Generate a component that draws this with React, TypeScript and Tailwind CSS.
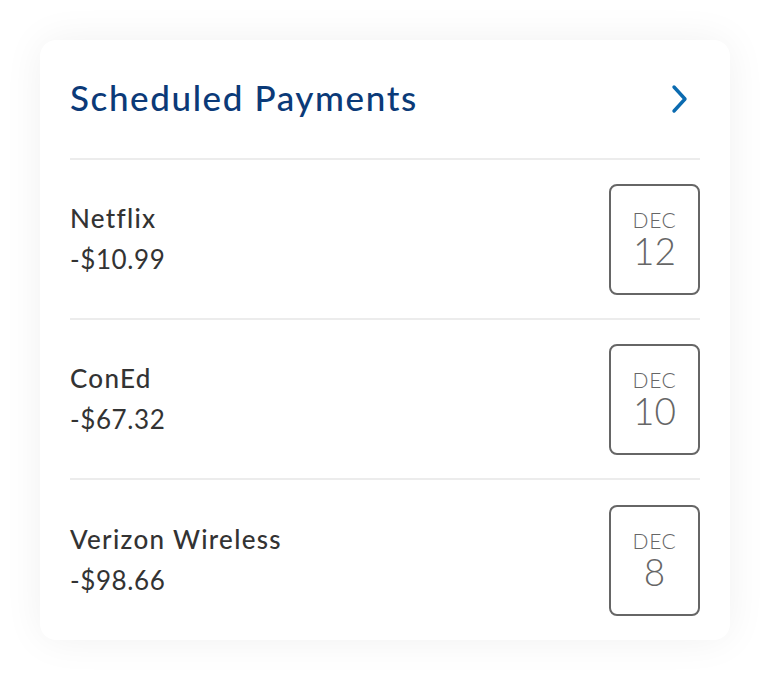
import React from 'react';

interface Payment {
    name: string;
    amount: string;
    month: string;
    day: string;
}

const payments: Payment[] = [
    { name: 'Netflix', amount: '-$10.99', month: 'DEC', day: '12' },
    { name: 'ConEd', amount: '-$67.32', month: 'DEC', day: '10' },
    { name: 'Verizon Wireless', amount: '-$98.66', month: 'DEC', day: '8' },
];

export default function App(): React.ReactElement {
    return (
        <div className="min-h-[680px] w-[770px] bg-white pt-10 pl-10" style={{ fontFamily: 'Lato, "Open Sans", sans-serif' }}>
            <div className="w-[690px] rounded-2xl bg-white px-[30px] shadow-[0_0_40px_rgba(0,0,0,0.06)]">
                {/* Header */}
                <div className="flex h-[120px] items-center justify-between border-b-2 border-[#ececec] pb-1">
                    <h2 className="text-[35px] font-medium tracking-[1.6px] text-[#0b3a78]">Scheduled Payments</h2>
                    <svg width="20" height="30" viewBox="0 0 20 30" fill="none" className="mt-1 mr-[10px]">
                        <path d="M4 3 L15 15 L4 27" stroke="#0b6bb0" strokeWidth="3.4" strokeLinecap="round" strokeLinejoin="round" />
                    </svg>
                </div>

                {/* Rows */}
                {payments.map((p, i) => (
                    <div
                        key={p.name}
                        className={`flex h-[160px] items-center justify-between ${i < payments.length - 1 ? 'border-b-2 border-[#ececec]' : ''}`}
                    >
                        <div className="flex flex-col">
                            <span className="text-[26px] font-medium leading-[41px] tracking-[1.3px] text-[#333]">{p.name}</span>
                            <span className="text-[26px] leading-[41px] tracking-[0.6px] text-[#333]">{p.amount}</span>
                        </div>
                        {/* date badge */}
                        <div className="flex h-[111px] w-[91px] flex-col items-center rounded-lg border-2 border-[#666] pt-[21px] text-[#666]">
                            <span className="text-[21px] font-light leading-[25px] tracking-[0.6px]">{p.month}</span>
                            <span className="text-[37px] font-light leading-[37px]">{p.day}</span>
                        </div>
                    </div>
                ))}
            </div>
        </div>
    );
}
